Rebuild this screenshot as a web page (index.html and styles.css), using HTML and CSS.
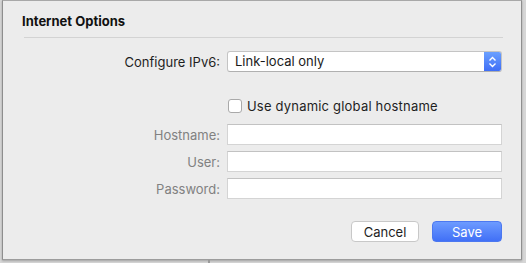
FILE: index.html
```html
<!DOCTYPE html>
<html lang="en">
<head>
    <meta charset="UTF-8">
    <title>Internet Options</title>
    <link rel="stylesheet" href="styles.css">
</head>
<body>
    <div class="sheet">
        <h1 class="sheet-title">Internet Options</h1>
        <hr class="divider">

        <form class="options-form">
            <label class="field-label" for="ipv6">Configure IPv6:</label>
            <div class="popup" id="ipv6">
                <span class="popup-value">Link-local only</span>
                <span class="stepper">
                    <svg width="9" height="12" viewBox="0 0 9 12">
                        <path d="M1.5 4.5 L4.5 1.5 L7.5 4.5 M1.5 7.5 L4.5 10.5 L7.5 7.5" fill="none" stroke="#fff" stroke-width="1.4"/>
                    </svg>
                </span>
            </div>

            <div class="check-row">
                <span class="checkbox"></span>
                <span>Use dynamic global hostname</span>
            </div>

            <label class="field-label disabled" for="hostname">Hostname:</label>
            <input class="text-field" type="text" id="hostname">

            <label class="field-label disabled" for="user">User:</label>
            <input class="text-field" type="text" id="user">

            <label class="field-label disabled" for="password">Password:</label>
            <input class="text-field" type="password" id="password">
        </form>

        <div class="actions">
            <button class="btn" type="button">Cancel</button>
            <button class="btn btn-primary" type="button">Save</button>
        </div>
    </div>
    <div class="under"></div>
</body>
</html>
```

FILE: styles.css
```css
* {
    margin: 0;
    padding: 0;
    box-sizing: border-box;
}

body {
    background-color: #d6d6d6;
    font-family: Inter, 'Liberation Sans', sans-serif;
    font-size: 13px;
    color: #222;
    overflow: hidden;
}

.sheet {
    width: 520px;
    height: 260px;
    margin-left: 2px;
    background-color: #ececec;
    border-top: 1px solid #a8a8a8;
    border-left: 1px solid #8e8e8e;
    border-right: 1px solid #8e8e8e;
    border-bottom: 1px solid #9c9c9c;
    box-shadow: 0 1px 2px rgba(0, 0, 0, 0.25);
    padding: 12px 0 0 19px;
}

.sheet-title {
    font-size: 13px;
    font-weight: 700;
    color: #111;
    line-height: 16px;
}

.divider {
    border: none;
    border-top: 1px solid #d3d3d3;
    width: 479px;
    margin: 8px 0 0 2px;
}

.options-form {
    display: grid;
    grid-template-columns: 196px 275px;
    column-gap: 7px;
    row-gap: 6px;
    align-items: center;
    margin: 13px 0 0 2px;
}

.field-label {
    text-align: right;
    color: #1e1e1e;
}

.field-label.disabled {
    color: #818181;
}

.popup {
    height: 21px;
    display: flex;
    align-items: stretch;
    background-color: #fff;
    border: 1px solid #c4c4c4;
    border-bottom-color: #b0b0b0;
    border-radius: 3px;
    overflow: hidden;
}

.popup-value {
    flex: 1;
    padding-left: 7px;
    line-height: 19px;
    color: #1a1a1a;
}

.stepper {
    width: 17px;
    display: flex;
    align-items: center;
    justify-content: center;
    background: linear-gradient(#6aa0ff, #3f6ef6);
}

.check-row {
    grid-column: 2;
    display: flex;
    align-items: center;
    gap: 5px;
    margin: 20px 0 4px 1px;
    color: #1e1e1e;
    letter-spacing: 0.2px;
}

.checkbox {
    width: 14px;
    height: 14px;
    background-color: #fff;
    border: 1px solid #a9a9a9;
    border-radius: 3px;
}

.text-field {
    height: 21px;
    background-color: #fff;
    border: 1px solid #d4d4d4;
    border-top-color: #c2c2c2;
    outline: none;
}

.actions {
    display: flex;
    justify-content: flex-end;
    gap: 13px;
    width: 480px;
    margin-top: 22px;
}

.btn {
    font-family: Inter, 'Liberation Sans', sans-serif;
    font-size: 13px;
    height: 21px;
    width: 68px;
    background-color: #fff;
    color: #1e1e1e;
    border: 1px solid #c8c8c8;
    border-radius: 4px;
}

.btn-primary {
    width: 70px;
    color: #fff;
    border-color: #4c78f0;
    background: linear-gradient(#6d9bff, #4170f6);
}

.under {
    height: 3px;
    margin-left: 208px;
    border-left: 2px solid #9a9a9a;
}
```
